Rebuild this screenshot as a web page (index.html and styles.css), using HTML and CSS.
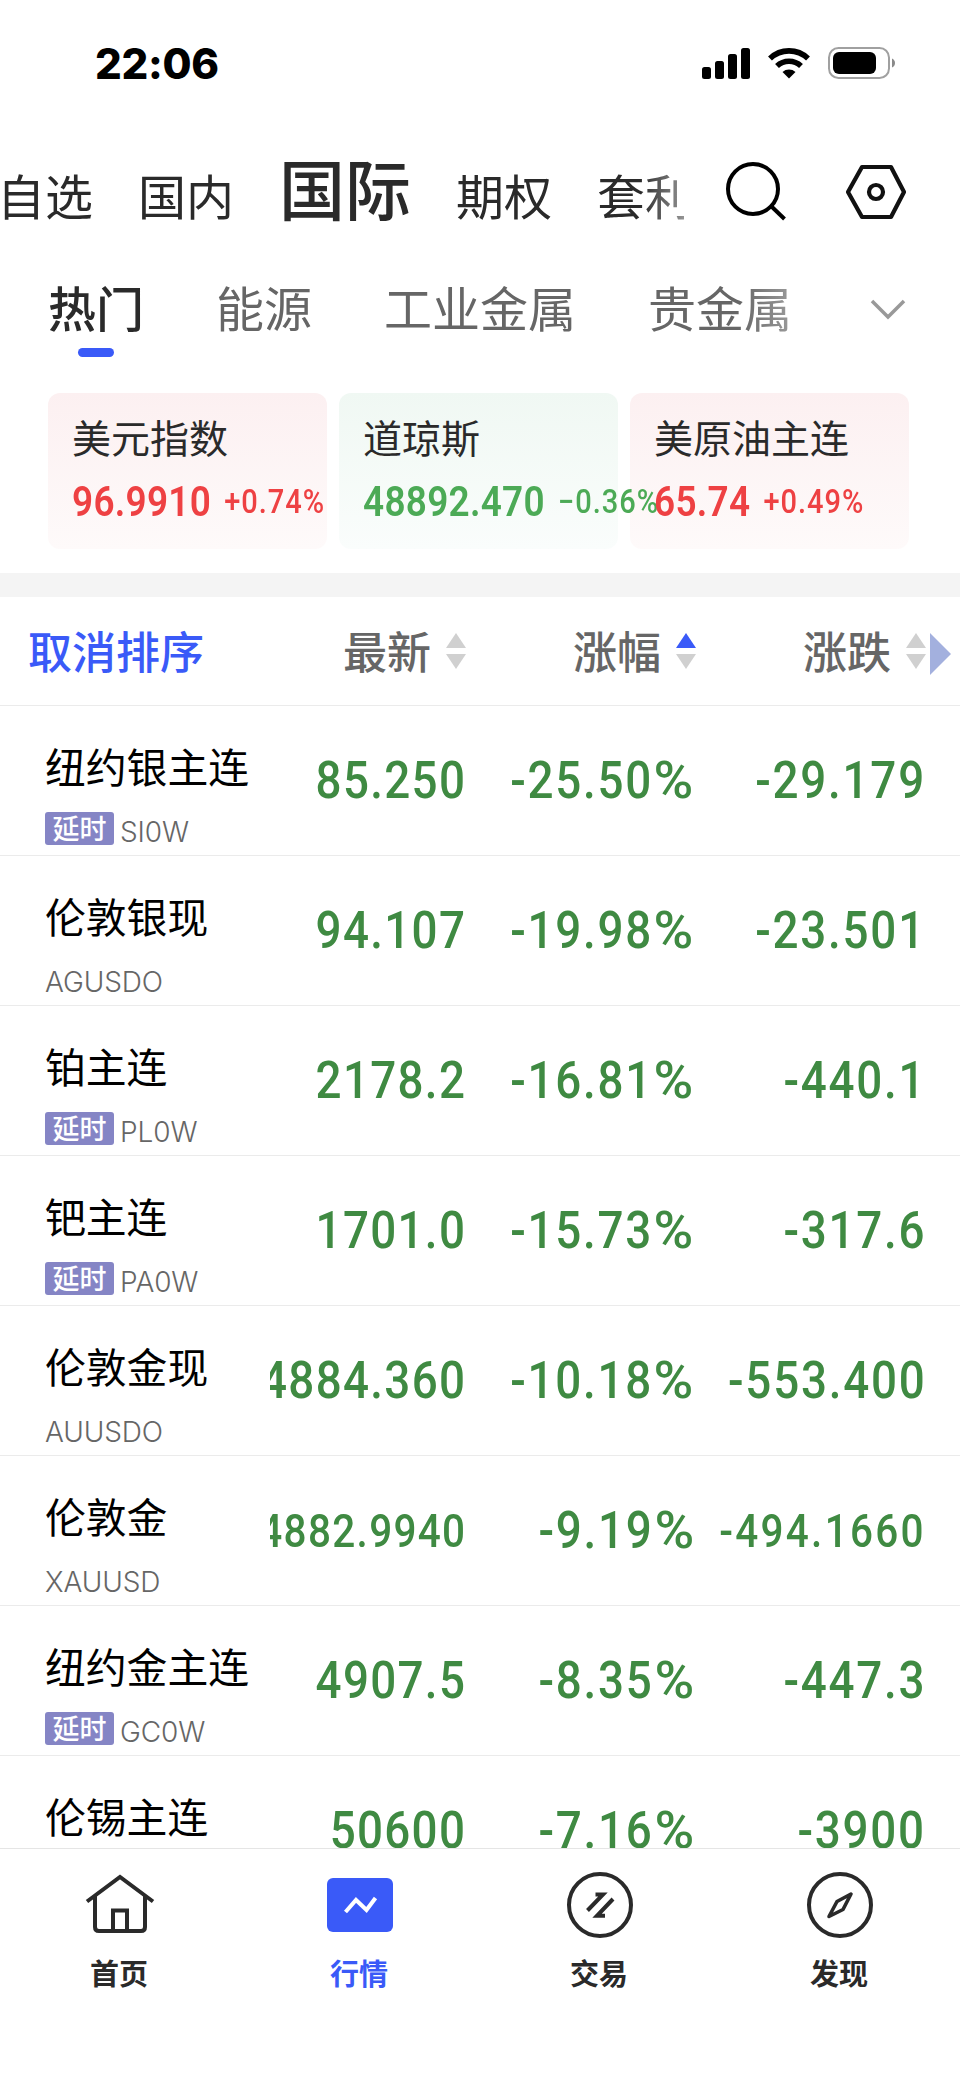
FILE: index.html
```html
<!DOCTYPE html>
<html lang="zh-CN">
<head>
    <meta charset="UTF-8">
    <meta name="viewport" content="width=device-width, initial-scale=1.0">
    <title>行情</title>
    <link rel="stylesheet" href="styles.css">
</head>
<body>
    <div class="status-bar">
        <span class="time">22:06</span>
        <svg class="status-icons" width="194" height="34" viewBox="0 0 194 34">
            <rect x="0" y="20" width="9" height="12" rx="2.5"/>
            <rect x="13" y="14" width="9" height="18" rx="2.5"/>
            <rect x="26" y="7" width="9" height="25" rx="2.5"/>
            <rect x="39" y="1" width="9" height="31" rx="2.5"/>
            <g fill="none" stroke="#000" stroke-width="5.6">
                <path d="M68 11.5a27.5 27.5 0 0 1 38 0"/>
                <path d="M75 19a17.5 17.5 0 0 1 24 0"/>
            </g>
            <path d="M80.500 25a10 10 0 0 1 13 0L87 31.500z"/>
            <rect x="127" y="1" width="60" height="30" rx="9.500" fill="none" stroke="#a0a0a0" stroke-width="2"/>
            <rect x="131" y="5" width="43" height="22" rx="6"/>
            <path d="M190 11.500q3 1.500 3 4.500t-3 4.500z" fill="#8a8a8a"/>
        </svg>
    </div>

    <div class="top-nav">
        <div class="market-tabs">
            <span>自选</span>
            <span>国内</span>
            <span class="active">国际</span>
            <span>期权</span>
            <span>套利</span>
        </div>
        <svg class="icon-search" width="62" height="62" viewBox="0 0 62 62" fill="none" stroke="#000" stroke-width="4">
            <circle cx="28" cy="28" r="25"/>
            <path d="M46 45l13.500 13"/>
        </svg>
        <svg class="icon-setting" width="62" height="56" viewBox="0 0 62 56" fill="none" stroke="#111" stroke-width="4.200" stroke-linejoin="round">
            <path d="M17 3h29l13 25-13 25H17L3 28z"/>
            <circle cx="31" cy="28" r="7"/>
        </svg>
    </div>

    <div class="sub-nav">
        <div class="sub-tabs">
            <span class="active">热门</span>
            <span>能源</span>
            <span>工业金属</span>
            <span>贵金属</span>
        </div>
        <svg width="36" height="22" viewBox="0 0 36 22" fill="none" stroke="#999" stroke-width="3.500">
            <path d="M2 2l16 16L34 2"/>
        </svg>
    </div>

    <div class="cards">
        <div class="card up">
            <p class="card-name">美元指数</p>
            <p class="quote"><b>96.9910</b><span>+0.74%</span></p>
        </div>
        <div class="card down">
            <p class="card-name">道琼斯</p>
            <p class="quote"><b>48892.470</b><span>−0.36%</span></p>
        </div>
        <div class="card up">
            <p class="card-name">美原油主连</p>
            <p class="quote"><b>65.74</b><span>+0.49%</span></p>
        </div>
    </div>

    <div class="table-head">
        <span class="cancel">取消排序</span>
        <span class="col">最新<i class="sort"></i></span>
        <span class="col">涨幅<i class="sort asc"></i></span>
        <span class="col">涨跌<i class="sort"></i></span>
        <i class="more"></i>
    </div>

    <div class="list">
        <div class="row">
            <div class="name">纽约银主连<div class="code"><em>延时</em><span>SI0W</span></div></div>
            <div class="num"><span>85.250</span></div>
            <div class="num"><span>-25.50<u>%</u></span></div>
            <div class="num"><span>-29.179</span></div>
        </div>
        <div class="row">
            <div class="name">伦敦银现<div class="code"><span>AGUSDO</span></div></div>
            <div class="num"><span>94.107</span></div>
            <div class="num"><span>-19.98<u>%</u></span></div>
            <div class="num"><span>-23.501</span></div>
        </div>
        <div class="row">
            <div class="name">铂主连<div class="code"><em>延时</em><span>PL0W</span></div></div>
            <div class="num"><span>2178.2</span></div>
            <div class="num"><span>-16.81<u>%</u></span></div>
            <div class="num"><span>-440.1</span></div>
        </div>
        <div class="row">
            <div class="name">钯主连<div class="code"><em>延时</em><span>PA0W</span></div></div>
            <div class="num"><span>1701.0</span></div>
            <div class="num"><span>-15.73<u>%</u></span></div>
            <div class="num"><span>-317.6</span></div>
        </div>
        <div class="row">
            <div class="name">伦敦金现<div class="code"><span>AUUSDO</span></div></div>
            <div class="num"><span>4884.360</span></div>
            <div class="num"><span>-10.18<u>%</u></span></div>
            <div class="num"><span>-553.400</span></div>
        </div>
        <div class="row">
            <div class="name">伦敦金<div class="code"><span>XAUUSD</span></div></div>
            <div class="num small"><span>4882.9940</span></div>
            <div class="num"><span>-9.19<u>%</u></span></div>
            <div class="num small wide"><span>-494.1660</span></div>
        </div>
        <div class="row">
            <div class="name">纽约金主连<div class="code"><em>延时</em><span>GC0W</span></div></div>
            <div class="num"><span>4907.5</span></div>
            <div class="num"><span>-8.35<u>%</u></span></div>
            <div class="num"><span>-447.3</span></div>
        </div>
        <div class="row">
            <div class="name">伦锡主连</div>
            <div class="num"><span>50600</span></div>
            <div class="num"><span>-7.16<u>%</u></span></div>
            <div class="num"><span>-3900</span></div>
        </div>
    </div>

    <div class="tab-bar">
        <div class="tab">
            <svg width="72" height="72" viewBox="0 0 72 72" fill="none" stroke="#2a2a2a" stroke-width="4">
                <path d="M3 32.500L36 8l33 24.500"/>
                <path d="M11 27v31q0 4 4 4h42q4 0 4-4V27"/>
                <path d="M29 62V41.500h14V62"/>
            </svg>
            <span>首页</span>
        </div>
        <div class="tab active">
            <svg width="72" height="72" viewBox="0 0 72 72">
                <rect x="3" y="9" width="66" height="54" rx="6" fill="#3a5af8"/>
                <path d="M21.500 43L32 31l10.500 10L51.500 29" fill="none" stroke="#fff" stroke-width="4"/>
            </svg>
            <span>行情</span>
        </div>
        <div class="tab">
            <svg width="72" height="72" viewBox="0 0 72 72" fill="none" stroke="#2a2a2a" stroke-width="4">
                <circle cx="36" cy="36" r="31"/>
                <path d="M23.500 41.500L39 25.500h-7.500M49 30L33 46.800h8"/>
            </svg>
            <span>交易</span>
        </div>
        <div class="tab">
            <svg width="72" height="72" viewBox="0 0 72 72" fill="none" stroke="#2a2a2a" stroke-width="4">
                <circle cx="36" cy="36" r="31"/>
                <path d="M47 25l-14 7.500L25 47.500l14-7z" stroke-width="3.600" stroke-linejoin="round"/>
            </svg>
            <span>发现</span>
        </div>
    </div>
</body>
</html>
```

FILE: styles.css
```css
* {
    box-sizing: border-box;
}

body {
    margin: 0;
    width: 960px;
    height: 2079px;
    overflow: hidden;
    background-color: #fff;
    color: #2a2a2a;
    font-family: "Noto Sans CJK SC", sans-serif;
}

p {
    margin: 0;
}

.status-bar {
    display: flex;
    justify-content: space-between;
    height: 128px;
    padding: 43px 64px 0 95px;
}

.time {
    font-family: Inter, sans-serif;
    font-size: 42px;
    font-weight: 800;
    line-height: 42px;
    letter-spacing: -0.3px;
    color: #000;
}

.status-icons {
    margin-top: 4px;
}

/* market tabs, fading out on the right */
.top-nav {
    display: flex;
    height: 116px;
}

.market-tabs {
    display: flex;
    align-items: baseline;
    gap: 45px;
    width: 684px;
    height: 116px;
    overflow: hidden;
    white-space: nowrap;
    font-size: 48px;
    line-height: 108px;
    -webkit-mask-image: linear-gradient(to right, #000 640px, rgba(0, 0, 0, 0.5) 684px);
    mask-image: linear-gradient(to right, #000 640px, rgba(0, 0, 0, 0.5) 684px);
}

.market-tabs span:first-child {
    margin-left: -3px;
}

.market-tabs .active {
    font-size: 66px;
    font-weight: 500;
    line-height: 116px;
}

.icon-search {
    margin: 33px 0 0 41px;
}

.icon-setting {
    margin: 36px 0 0 58px;
}

.sub-nav {
    display: flex;
    justify-content: space-between;
    align-items: flex-start;
    height: 149px;
    padding: 26px 54px 0 48px;
}

.sub-nav svg {
    margin-top: 29px;
}

.sub-tabs {
    display: flex;
    gap: 72px;
    width: 768px;
    font-size: 48px;
    line-height: 72px;
    color: #666;
    white-space: nowrap;
    -webkit-mask-image: linear-gradient(to right, #000 690px, rgba(0, 0, 0, 0.5) 768px);
    mask-image: linear-gradient(to right, #000 690px, rgba(0, 0, 0, 0.5) 768px);
}

.sub-tabs .active {
    display: flex;
    flex-direction: column;
    align-items: center;
    color: #2a2a2a;
    font-weight: 500;
}

.sub-tabs .active::after {
    content: "";
    width: 36px;
    height: 9px;
    margin-top: 6px;
    border-radius: 5px;
    background-color: #3a5af8;
}

.cards {
    display: flex;
    gap: 12px;
    height: 180px;
    padding: 0 48px 24px;
}

.card {
    width: 279px;
    height: 156px;
    padding: 15px 24px 0;
    border-radius: 12px;
    white-space: nowrap;
}

.card.up {
    background: linear-gradient(#fcf0f1, #fefafa);
    color: #ee4143;
}

.card.down {
    background: linear-gradient(#f0f8f3, #fafdfc);
    color: #4caa56;
}

.card-name {
    font-size: 39px;
    line-height: 56px;
    color: #2a2a2a;
}

/* narrow digits */
.quote {
    display: flex;
    align-items: center;
    gap: 15px;
    height: 56px;
    margin-top: 9px;
    font-family: Roboto, sans-serif;
    font-size: 33px;
    font-weight: 500;
    letter-spacing: 1.1px;
    transform: scaleX(0.88);
    transform-origin: left;
}

.quote b {
    font-size: 42px;
    font-weight: 600;
    letter-spacing: 0.3px;
}

.table-head {
    display: flex;
    align-items: center;
    height: 133px;
    padding-left: 28px;
    border-top: 24px solid #f4f4f4;
    border-bottom: 1px solid #ebebeb;
    color: #666;
    font-size: 44px;
    font-weight: 500;
    line-height: 60px;
}

.table-head span {
    padding-bottom: 3px;
}

.cancel {
    width: 208px;
    color: #3a5af8;
}

.col {
    display: flex;
    align-items: center;
    justify-content: flex-end;
    gap: 15px;
    width: 230px;
}

.sort {
    padding-top: 3px;
}

.sort::before,
.sort::after {
    content: "";
    display: block;
    border: 10px solid transparent;
}

.sort::before {
    border-top: 0;
    border-bottom: 15px solid #d0d0d0;
    margin-bottom: 6px;
}

.sort::after {
    border-bottom: 0;
    border-top: 15px solid #d0d0d0;
}

.sort.asc::before {
    border-bottom-color: #3a5af8;
}

.more {
    margin: 6px 0 0 4px;
    border: 21px solid transparent;
    border-left-color: #a3b0de;
    border-right: 0;
}

.list {
    height: 1142px;
    overflow: hidden;
}

.row {
    display: grid;
    grid-template-columns: 270px 196px 230px 230px;
    height: 150px;
    border-bottom: 1px solid #ebebeb;
}

.name {
    padding: 33px 0 0 45px;
    color: #000;
    font-size: 40.8px;
    line-height: 54px;
    white-space: nowrap;
}

.code {
    display: flex;
    align-items: flex-end;
    gap: 6px;
    height: 33px;
    margin-top: 19px;
    color: #666;
    font-family: Inter, sans-serif;
    font-size: 28px;
    font-weight: 350;
    letter-spacing: -0.1px;
    line-height: 26px;
}

.code em {
    width: 69px;
    height: 33px;
    border-radius: 3px;
    background-color: #8585c5;
    color: #fff;
    font-family: "Noto Sans CJK SC", sans-serif;
    font-size: 27px;
    font-style: normal;
    font-weight: 500;
    letter-spacing: 0;
    line-height: 31px;
    text-align: center;
}

.num {
    display: flex;
    align-items: center;
    justify-content: flex-end;
    overflow: hidden;
    color: #3f8a42;
    font-family: Roboto, sans-serif;
    font-size: 52px;
    font-weight: 500;
    letter-spacing: 1.5px;
    white-space: nowrap;
}

.num:nth-child(3),
.num:last-child {
    letter-spacing: 2px;
}

.num span {
    transform: scaleX(0.88);
    transform-origin: right;
}

.num u {
    display: inline-block;
    margin-left: 8px;
    text-decoration: none;
    transform: scaleX(1.18);
    transform-origin: right;
}

.num.small {
    font-size: 46px;
}

.num.wide:last-child {
    letter-spacing: 2.6px;
}

.tab-bar {
    display: flex;
    height: 231px;
    padding-top: 20px;
    border-top: 1px solid #e5e5e5;
    background-color: #fff;
}

.tab {
    display: flex;
    flex-direction: column;
    align-items: center;
    width: 240px;
    font-size: 29px;
    font-weight: 700;
    line-height: 42px;
}

.tab span {
    margin: 10px 2px 0 0;
}

.tab.active {
    color: #3a5af8;
}
```
